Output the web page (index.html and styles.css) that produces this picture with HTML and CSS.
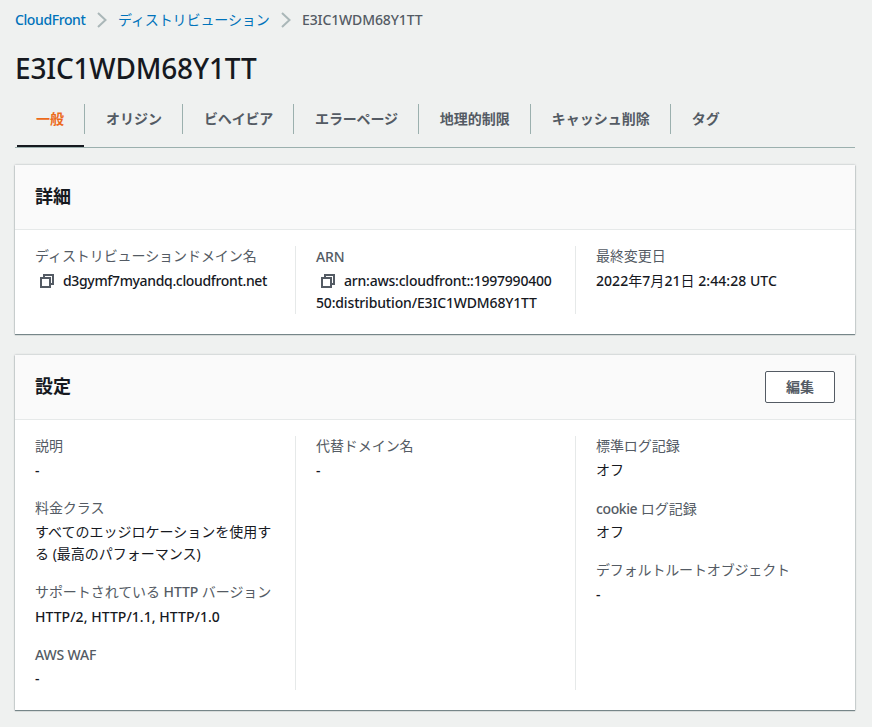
FILE: index.html
```html
<!DOCTYPE html>
<html lang="ja">
<head>
<meta charset="utf-8">
<title>CloudFront</title>
<link rel="stylesheet" href="styles.css">
</head>
<body>
<nav class="crumbs">
<a class="c1">CloudFront</a>
<svg class="chev" viewBox="0 0 10 16"><path d="M1 1 8.500 8 1 15"/></svg>
<a class="c2">ディストリビューション</a>
<svg class="chev" viewBox="0 0 10 16"><path d="M1 1 8.500 8 1 15"/></svg>
<span class="c3">E3IC1WDM68Y1TT</span>
</nav>
<h1>E3IC1WDM68Y1TT</h1>
<div class="tabs">
<div class="tab active">一般</div><div class="tab">オリジン</div><div class="tab tight">ビヘイビア</div><div class="tab tight">エラーページ</div><div class="tab">地理的制限</div><div class="tab">キャッシュ削除</div><div class="tab">タグ</div>
</div>
<section class="card details">
<header><h2>詳細</h2></header>
<div class="cols">
<div class="col"><dl><dt class="jp">ディストリビューションドメイン名</dt><dd><svg class="copy" viewBox="0 0 14 14"><path d="M1 4h9v9H1zM4 4V1h9v9h-3"/></svg><span class="en domain">d3gymf7myandq.cloudfront.net</span></dd></dl></div>
<div class="col"><dl><dt class="en label">ARN</dt><dd><svg class="copy" viewBox="0 0 14 14"><path d="M1 4h9v9H1zM4 4V1h9v9h-3"/></svg><span class="en arn">arn:aws:cloudfront::1997990400</span><br><span class="en arn2">50:distribution/E3IC1WDM68Y1TT</span></dd></dl></div>
<div class="col"><dl><dt class="jp">最終変更日</dt><dd class="date"><span class="en">2022</span>年<span class="en">7</span>月<span class="en">21</span>日 <span class="en">2:44:28 UTC</span></dd></dl></div>
</div>
</section>
<section class="card settings">
<header><h2>設定</h2><button>編集</button></header>
<div class="cols">
<div class="col">
<dl><dt class="jp">説明</dt><dd class="en">-</dd></dl>
<dl><dt class="jp">料金クラス</dt><dd class="jp">すべてのエッジロケーションを使用す<br>る (最高のパフォーマンス)</dd></dl>
<dl><dt class="jp">サポートされている <span class="en">HTTP</span> バージョン</dt><dd class="en http">HTTP/2, HTTP/1.1, HTTP/1.0</dd></dl>
<dl><dt class="en label">AWS WAF</dt><dd class="en">-</dd></dl>
</div>
<div class="col"><dl><dt class="jp">代替ドメイン名</dt><dd class="en">-</dd></dl></div>
<div class="col">
<dl><dt class="jp">標準ログ記録</dt><dd class="jp">オフ</dd></dl>
<dl><dt><span class="en cookie">cookie</span> ログ記録</dt><dd class="jp">オフ</dd></dl>
<dl><dt class="jp kana">デフォルトルートオブジェクト</dt><dd class="en">-</dd></dl>
</div>
</div>
</section>
</body>
</html>
```
FILE: styles.css
```css
* { box-sizing: border-box; }
body { margin: 0; padding: 0 17px 0 15px; height: 727px; overflow: hidden; background: #eff1f0; color: #16191f; font: 14px/22px "Noto Sans", "Noto Sans CJK JP", sans-serif; white-space: nowrap; }
.crumbs { display: flex; align-items: center; height: 40px; color: #545b64; }
.crumbs a { color: #0073bb; }
.c1 { width: 71px; font-weight: 500; letter-spacing: -.4px; }
.c2 { width: 152px; letter-spacing: -.1px; }
.c3 { font-weight: 500; letter-spacing: -.12px; }
.chev { width: 10px; height: 16px; margin: 0 11px; fill: none; stroke: #aab7b8; stroke-width: 2; }
h1 { margin: 10px 0 0; font-size: 28px; line-height: 36px; font-weight: 500; letter-spacing: -.2px; }
.tabs { display: flex; margin-top: 18px; height: 44px; border-bottom: 1px solid #9bb0ae; }
.tab { position: relative; height: 30px; padding: 4px 20px 0 21px; border-right: 1px solid #9bb0ae; color: #545b64; font-weight: 700; }
.tab.tight { letter-spacing: -.18px; }
.tab:last-child { border: 0; }
.tab.active { color: #ec6a1a; }
.tab.active::after { content: ""; position: absolute; left: 2px; right: 0; top: 41px; height: 2px; background: #16191f; }
.card { width: 840px; background: #fff; box-shadow: 0 1px 1px rgba(0,28,36,.45), 0 0 2px rgba(0,28,36,.3); }
.details { margin-top: 17px; height: 169px; }
.settings { margin-top: 21px; height: 355px; }
.card header { display: flex; justify-content: space-between; align-items: center; height: 65px; padding: 0 20px; background: #fafafa; border-bottom: 1px solid #e6e9e9; }
h2 { margin: 0; padding-bottom: 2px; font-size: 18px; line-height: 22px; }
button { width: 70px; height: 32px; padding: 0 0 2px; background: #fff; border: 1px solid #545b64; border-radius: 2px; color: #545b64; font: 700 14px "Noto Sans CJK JP", sans-serif; }
.cols { display: grid; grid-template-columns: 280px 280px 280px; padding-top: 16px; }
.col { padding-left: 20px; border-left: 1px solid #e6e9e9; height: 68px; }
.col:first-child { border: 0; }
.settings .col { height: 254px; }
dl { margin: 0 0 16px; }
dt { color: #545b64; }
dd { margin: 2px 0 0; }
.jp { letter-spacing: -.07px; margin-top: -1px; padding-bottom: 1px; }
dd.jp { margin-top: 1px; letter-spacing: 0; }
.kana { letter-spacing: -.15px; }
.en { font-weight: 500; }
.label { letter-spacing: -.15px; }
.domain { letter-spacing: -.34px; }
.arn { letter-spacing: -.22px; }
.arn2 { letter-spacing: -.16px; }
.date { letter-spacing: .05px; }
.http { letter-spacing: .04px; }
.cookie { letter-spacing: -.4px; }
.copy { width: 14px; height: 14px; margin: 0 9px 0 5px; vertical-align: -2px; fill: none; stroke: #545b64; stroke-width: 2; }
```
